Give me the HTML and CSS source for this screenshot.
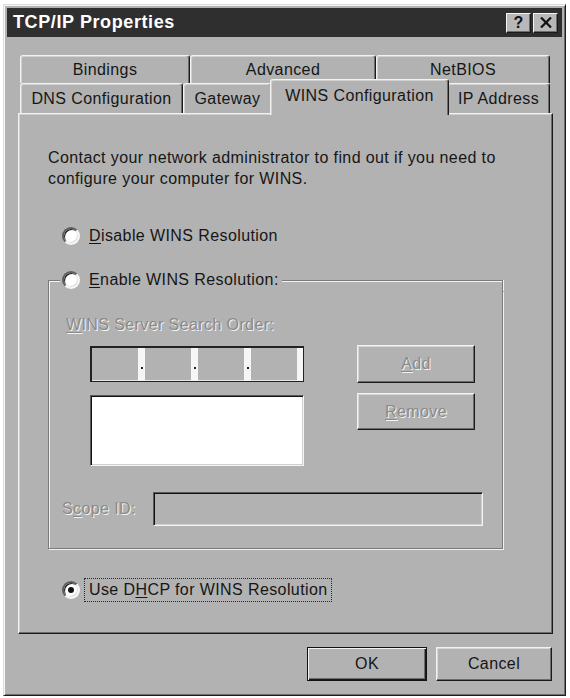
FILE: index.html
```html
<!DOCTYPE html>
<html lang="en">
<head>
<meta charset="utf-8">
<title>TCP/IP Properties</title>
<link rel="stylesheet" href="styles.css">
</head>
<body>
<div class="window">
  <div class="titlebar">
    <span class="title">TCP/IP Properties</span>
    <div class="title-btns">
      <span class="tbtn help">?</span>
      <span class="tbtn close"><svg width="12" height="11" viewBox="0 0 12 11"><path d="M1 0.5 L11 10.5 M11 0.5 L1 10.5" stroke="#111" stroke-width="2.2"/></svg></span>
    </div>
  </div>

  <div class="tabs">
    <div class="tab-row back">
      <div class="tab w-bind">Bindings</div>
      <div class="tab w-adv">Advanced</div>
      <div class="tab w-net">NetBIOS</div>
    </div>
    <div class="tab-row front">
      <div class="tab w-dns">DNS Configuration</div>
      <div class="tab w-gw">Gateway</div>
      <div class="tab active w-wins">WINS Configuration</div>
      <div class="tab w-ip">IP Address</div>
    </div>
  </div>

  <div class="panel">
    <p class="intro">Contact your network administrator to find out if you need to<br>configure your computer for WINS.</p>

    <div class="radio-row first"><span class="radio"></span><span><u>D</u>isable WINS Resolution</span></div>

    <div class="group">
      <div class="group-head">
        <span class="gline start"></span>
        <span class="radio"></span>
        <span class="legend-text"><u>E</u>nable WINS Resolution:</span>
        <span class="gline end"></span>
      </div>
      <div class="group-body">
        <div class="disabled order-label"><u>W</u>INS Server Search Order:</div>
        <div class="server-row">
          <div class="server-left">
            <div class="ipfield">
              <span class="seg"></span><span class="sep"></span>
              <span class="seg"></span><span class="sep"></span>
              <span class="seg"></span><span class="sep"></span>
              <span class="seg"></span><span class="sep end"></span>
            </div>
            <div class="sunken listbox"></div>
          </div>
          <div class="server-right">
            <div class="btn side add disabled"><u>A</u>dd</div>
            <div class="btn side remove disabled"><u>R</u>emove</div>
          </div>
        </div>
        <div class="scope-row">
          <span class="disabled scope-label">S<u>c</u>ope ID:</span>
          <div class="sunken scope-field"></div>
        </div>
      </div>
    </div>

    <div class="radio-row dhcp"><span class="radio checked"></span><span class="focus">Use D<u>H</u>CP for WINS Resolution</span></div>
  </div>

  <div class="buttons">
    <div class="btn ok">OK</div>
    <div class="btn cancel">Cancel</div>
  </div>
</div>
</body>
</html>
```

FILE: styles.css
```css
body {
  margin: 0;
  background: #ffffff;
  font-family: "Liberation Sans", Arial, sans-serif;
  font-size: 16px;
  letter-spacing: 0.4px;
  color: #161616;
}

.window {
  box-sizing: border-box;
  width: 563px;
  height: 692px;
  margin: 4px 0 0 3px;
  padding: 3px;
  background: #b2b2b2;
  border: 1px solid;
  border-color: #dcdcdc #1e1e1e #1e1e1e #dcdcdc;
  box-shadow: inset 1px 1px 0 #f6f6f6, inset -1px -1px 0 #6c6c6c;
  display: flex;
  flex-direction: column;
}

/* title bar */
.titlebar {
  height: 29px;
  flex: none;
  background: #2f2f2f;
  color: #ffffff;
  display: flex;
  align-items: center;
  justify-content: space-between;
  padding: 0 4px 0 6px;
}
.title {
  font-weight: bold;
  font-size: 18px;
  letter-spacing: 0.6px;
}
.title-btns {
  display: flex;
  gap: 2px;
}
.tbtn {
  box-sizing: border-box;
  width: 25px;
  height: 20px;
  background: #b8b8b8;
  border: 1px solid;
  border-color: #f4f4f4 #1a1a1a #1a1a1a #f4f4f4;
  box-shadow: inset -1px -1px 0 #6c6c6c;
  display: flex;
  align-items: center;
  justify-content: center;
  color: #111;
  font-weight: bold;
  font-size: 16px;
  letter-spacing: 0;
}

/* tabs */
.tabs {
  margin-top: 18px;
  padding-left: 13px;
}
.tab-row {
  display: flex;
  align-items: flex-start;
}
.back { height: 28px; }
.front { height: 30px; }
.tab {
  box-sizing: border-box;
  height: 100%;
  background: #b2b2b2;
  border-top: 1px solid #f2f2f2;
  border-left: 1px solid #f2f2f2;
  border-right: 1px solid #1a1a1a;
  box-shadow: inset -1px 0 0 #6c6c6c, inset 1px 1px 0 #d0d0d0;
  border-radius: 3px 3px 0 0;
  display: flex;
  align-items: center;
  justify-content: center;
  white-space: nowrap;
}
.w-bind { width: 170px; }
.w-adv { width: 186px; }
.w-net { width: 174px; }
.w-dns { width: 163px; }
.w-gw { width: 89px; }
.w-wins { width: 179px; }
.w-ip { width: 103px; }
.tab.active {
  height: 36px;
  margin: -4px -2px 0;
  position: relative;
  z-index: 1;
  padding-bottom: 4px;
}

/* panel */
.panel {
  box-sizing: border-box;
  flex: none;
  width: 535px;
  height: 521px;
  margin-left: 11px;
  padding: 33px 0 0 29px;
  border: 1px solid;
  border-color: #f2f2f2 #1a1a1a #1a1a1a #f2f2f2;
  box-shadow: inset -1px -1px 0 #6c6c6c, inset 1px 1px 0 #d0d0d0;
}
.intro {
  margin: 0;
  line-height: 21px;
}

.radio-row {
  display: flex;
  align-items: center;
  height: 22px;
  margin-left: 14px;
  gap: 9px;
}
.first { margin-top: 36px; }
.dhcp { margin-top: 30px; }

.radio {
  box-sizing: border-box;
  flex: none;
  width: 18px;
  height: 18px;
  border-radius: 50%;
  background: #ffffff;
  border: 2px solid;
  border-color: #5e5e5e #f6f6f6 #f6f6f6 #5e5e5e;
  box-shadow: inset 1px 1px 0 #1a1a1a, inset -1px -1px 0 #dcdcdc;
  display: flex;
  align-items: center;
  justify-content: center;
}
.radio.checked::after {
  content: "";
  width: 6px;
  height: 6px;
  border-radius: 50%;
  background: #111;
}

u {
  text-decoration-thickness: 1px;
  text-underline-offset: 2px;
}

.focus {
  border: 1px dotted #2a2a2a;
  padding: 1px 3px 1px 4px;
  margin-left: -5px;
  line-height: 20px;
}

/* group box */
.group {
  width: 455px;
  margin-top: 22px;
}
.group-head {
  display: flex;
  align-items: center;
  height: 22px;
}
.gline {
  box-sizing: border-box;
  align-self: flex-end;
  height: 11px;
  border-top: 1px solid #7a7a7a;
}
.gline.start {
  width: 12px;
  margin-right: 2px;
  border-left: 1px solid #7a7a7a;
  box-shadow: inset 1px 1px 0 #f2f2f2;
}
.legend-text {
  margin-left: 9px;
  margin-right: 3px;
}
.gline.end {
  flex: 1;
  border-right: 1px solid #7a7a7a;
  box-shadow: inset 0 1px 0 #f2f2f2, 1px 0 0 #f2f2f2;
}
.group-body {
  box-sizing: border-box;
  height: 258px;
  border: 1px solid #7a7a7a;
  border-top: none;
  box-shadow: inset 1px 0 0 #f2f2f2, 1px 1px 0 #f2f2f2;
  padding: 23px 0 0 17px;
}

.disabled {
  color: #8a8a8a;
  text-shadow: 1px 1px 0 #f4f4f4;
}
.order-label {
  line-height: 22px;
}

.server-row {
  display: flex;
  gap: 53px;
  margin: 9px 0 0 24px;
}
.server-left {
  display: flex;
  flex-direction: column;
  gap: 13px;
  margin-top: 1px;
}
.server-right {
  display: flex;
  flex-direction: column;
  gap: 10px;
}

.ipfield {
  box-sizing: border-box;
  width: 214px;
  height: 36px;
  display: flex;
  border: 2px solid #222;
  border-right-width: 1px;
  border-bottom-width: 1px;
  box-shadow: inset -1px -1px 0 #e6e6e6;
  background: #b2b2b2;
}
.seg { flex: 1; }
.sep {
  width: 7px;
  background: #f6f6f6;
  display: flex;
  justify-content: center;
  align-items: flex-end;
  padding-bottom: 12px;
  box-sizing: border-box;
}
.sep::after {
  content: "";
  width: 2px;
  height: 2px;
  background: #222;
}
.sep.end::after { display: none; }
.sep.end { width: 6px; }

.sunken {
  box-sizing: border-box;
  border: 1px solid;
  border-color: #5a5a5a #f4f4f4 #f4f4f4 #5a5a5a;
  box-shadow: inset 1px 1px 0 #111, inset -1px -1px 0 #cfcfcf;
}
.listbox {
  width: 214px;
  height: 71px;
  background: #ffffff;
}

.scope-row {
  display: flex;
  align-items: center;
  margin-top: 26px;
}
.scope-label {
  width: 91px;
  margin-left: -4px;
  flex: none;
}
.scope-field {
  width: 330px;
  height: 34px;
  background: #b2b2b2;
}

/* buttons */
.btn {
  box-sizing: border-box;
  height: 34px;
  background: #b2b2b2;
  border: 1px solid;
  border-color: #f2f2f2 #1a1a1a #1a1a1a #f2f2f2;
  box-shadow: inset -1px -1px 0 #6c6c6c, inset 1px 1px 0 #d6d6d6;
  display: flex;
  align-items: center;
  justify-content: center;
}
.side { width: 118px; }
.add { height: 38px; }
.remove { height: 37px; }

.buttons {
  display: flex;
  justify-content: flex-end;
  gap: 9px;
  margin-top: 13px;
  padding-right: 10px;
}
.ok {
  width: 120px;
  border: 1px solid #111;
  box-shadow: inset 1px 1px 0 #f2f2f2, inset -1px -1px 0 #1a1a1a, inset -2px -2px 0 #6c6c6c;
}
.cancel { width: 116px; }
```
